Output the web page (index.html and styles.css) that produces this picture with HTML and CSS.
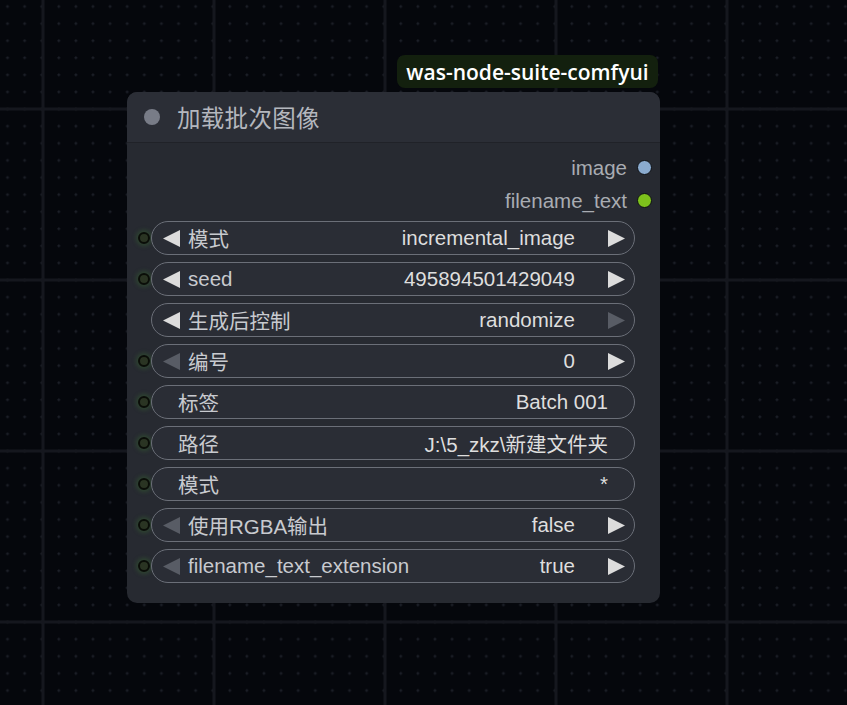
FILE: index.html
```html
<!DOCTYPE html>
<html lang="zh">
<head>
    <meta charset="UTF-8">
    <meta name="viewport" content="width=device-width, initial-scale=1.0">
    <title>加载批次图像</title>
    <link rel="stylesheet" href="styles.css">
</head>
<body>
<div class="canvas">
    <!-- graph background -->
    <svg class="grid" width="847" height="705">
        <defs>
            <pattern id="minor" width="17.1" height="17.1" patternUnits="userSpaceOnUse">
                <rect x="6" y="6" width="3" height="1" fill="#1f222b"/>
                <rect x="7" y="5" width="1" height="3" fill="#1f222b"/>
            </pattern>
            <pattern id="major" width="171" height="171" patternUnits="userSpaceOnUse">
                <rect x="41.5" y="0" width="3" height="171" fill="#15171e"/>
                <rect x="0" y="107.5" width="171" height="3" fill="#15171e"/>
            </pattern>
        </defs>
        <rect width="100%" height="100%" fill="url(#minor)"/>
        <rect width="100%" height="100%" fill="url(#major)"/>
    </svg>

    <div class="badge">was-node-suite-comfyui</div>

    <div class="node">
        <div class="node-title">
            <span class="title-dot"></span>
            <span class="title-text">加载批次图像</span>
        </div>
        <div class="node-body">
            <div class="outputs">
                <div class="output"><span>image</span><span class="slot slot-image"></span></div>
                <div class="output"><span>filename_text</span><span class="slot slot-text"></span></div>
            </div>

            <div class="widgets">
                <div class="row">
                    <span class="in-slot"></span>
                    <div class="widget">
                        <svg class="arrow" viewBox="0 0 17 17"><polygon points="17,0 17,17 0,8.5"/></svg>
                        <span class="label">模式</span>
                        <span class="value">incremental_image</span>
                        <svg class="arrow" viewBox="0 0 17 17"><polygon points="0,0 17,8.5 0,17"/></svg>
                    </div>
                </div>
                <div class="row">
                    <span class="in-slot"></span>
                    <div class="widget">
                        <svg class="arrow" viewBox="0 0 17 17"><polygon points="17,0 17,17 0,8.5"/></svg>
                        <span class="label">seed</span>
                        <span class="value">495894501429049</span>
                        <svg class="arrow" viewBox="0 0 17 17"><polygon points="0,0 17,8.5 0,17"/></svg>
                    </div>
                </div>
                <div class="row">
                    <span class="in-slot hidden"></span>
                    <div class="widget">
                        <svg class="arrow" viewBox="0 0 17 17"><polygon points="17,0 17,17 0,8.5"/></svg>
                        <span class="label">生成后控制</span>
                        <span class="value">randomize</span>
                        <svg class="arrow off" viewBox="0 0 17 17"><polygon points="0,0 17,8.5 0,17"/></svg>
                    </div>
                </div>
                <div class="row">
                    <span class="in-slot"></span>
                    <div class="widget">
                        <svg class="arrow off" viewBox="0 0 17 17"><polygon points="17,0 17,17 0,8.5"/></svg>
                        <span class="label">编号</span>
                        <span class="value">0</span>
                        <svg class="arrow" viewBox="0 0 17 17"><polygon points="0,0 17,8.5 0,17"/></svg>
                    </div>
                </div>
                <div class="row">
                    <span class="in-slot"></span>
                    <div class="widget text">
                        <span class="label">标签</span>
                        <span class="value">Batch 001</span>
                    </div>
                </div>
                <div class="row">
                    <span class="in-slot"></span>
                    <div class="widget text">
                        <span class="label">路径</span>
                        <span class="value">J:\5_zkz\新建文件夹</span>
                    </div>
                </div>
                <div class="row">
                    <span class="in-slot"></span>
                    <div class="widget text">
                        <span class="label">模式</span>
                        <span class="value">*</span>
                    </div>
                </div>
                <div class="row">
                    <span class="in-slot"></span>
                    <div class="widget">
                        <svg class="arrow off" viewBox="0 0 17 17"><polygon points="17,0 17,17 0,8.5"/></svg>
                        <span class="label">使用RGBA输出</span>
                        <span class="value">false</span>
                        <svg class="arrow" viewBox="0 0 17 17"><polygon points="0,0 17,8.5 0,17"/></svg>
                    </div>
                </div>
                <div class="row">
                    <span class="in-slot"></span>
                    <div class="widget">
                        <svg class="arrow off" viewBox="0 0 17 17"><polygon points="17,0 17,17 0,8.5"/></svg>
                        <span class="label">filename_text_extension</span>
                        <span class="value">true</span>
                        <svg class="arrow" viewBox="0 0 17 17"><polygon points="0,0 17,8.5 0,17"/></svg>
                    </div>
                </div>
            </div>
        </div>
    </div>
</div>
</body>
</html>
```
FILE: styles.css
```css
body {
    margin: 0;
    background: #05070c;
    font-family: "Liberation Sans", "Noto Sans CJK SC", sans-serif;
}
.canvas {
    position: relative;
    width: 847px;
    height: 705px;
    overflow: hidden;
    background: #05070c;
}
.grid {
    position: absolute;
    left: 0;
    top: 0;
}

/* group badge above the node */
.badge {
    position: absolute;
    left: 397px;
    top: 55px;
    height: 33px;
    box-sizing: border-box;
    width: 261px;
    display: flex;
    align-items: center;
    justify-content: center;
    background: #13200e;
    border-radius: 8px;
    color: #ffffff;
    font-family: "Open Sans", "Liberation Sans", sans-serif;
    font-weight: 600;
    font-size: 21px;
    white-space: nowrap;
}

.node {
    position: absolute;
    left: 127px;
    top: 92px;
    width: 533px;
    height: 511px;
    background: #272a31;
    border-radius: 10px;
    overflow: hidden;
    display: flex;
    flex-direction: column;
}
.node-title {
    height: 50px;
    background: #2b2e36;
    border-bottom: 1px solid #202228;
    display: flex;
    align-items: center;
    padding-left: 17px;
}
.title-dot {
    width: 16px;
    height: 16px;
    border-radius: 50%;
    background: #787c87;
}
.title-text {
    margin-left: 17px;
    color: #b4b7be;
    font-size: 23.5px;
    letter-spacing: 0.3px;
}

.outputs {
    padding-top: 8px;
    display: flex;
    flex-direction: column;
}
.output {
    height: 33px;
    display: flex;
    align-items: center;
    justify-content: flex-end;
    padding-right: 8px;
    color: #a9acb2;
    font-size: 20.5px;
}
.slot {
    width: 13px;
    height: 13px;
    margin-left: 10px;
    border-radius: 50%;
    border: 1.5px solid #0e1014;
}
.slot-image {
    background: #8aabcf;
}
.slot-text {
    background: #7ec21c;
}

.widgets {
    margin-top: 4px;
    display: flex;
    flex-direction: column;
    gap: 7px;
}
.row {
    display: flex;
    align-items: center;
    padding-left: 11px;
}
.in-slot {
    width: 8px;
    height: 8px;
    border-radius: 50%;
    border: 2px solid #0a0d08;
    background: #2a3423;
    box-shadow: 0 0 4px 2px rgba(60, 120, 50, 0.35);
    margin-right: 1px;
}
.in-slot.hidden {
    visibility: hidden;
}
.widget {
    width: 484px;
    height: 34px;
    box-sizing: border-box;
    border: 1.5px solid #6b6f78;
    border-radius: 17px;
    background: #2a2d35;
    display: flex;
    align-items: center;
    padding: 0 9px 0 11px;
    font-size: 20.5px;
}
.widget.text {
    padding: 0 26px 0 26px;
}
.arrow {
    width: 17px;
    height: 17px;
    fill: #dcdcdc;
    flex: none;
}
.arrow.off {
    fill: #585c65;
}
.label {
    margin-left: 8px;
    color: #c8cacf;
    white-space: nowrap;
}
.widget.text .label {
    margin-left: 0;
}
.value {
    margin-left: auto;
    margin-right: 33px;
    color: #dedede;
    white-space: nowrap;
}
.widget.text .value {
    margin-right: 0;
}
```
